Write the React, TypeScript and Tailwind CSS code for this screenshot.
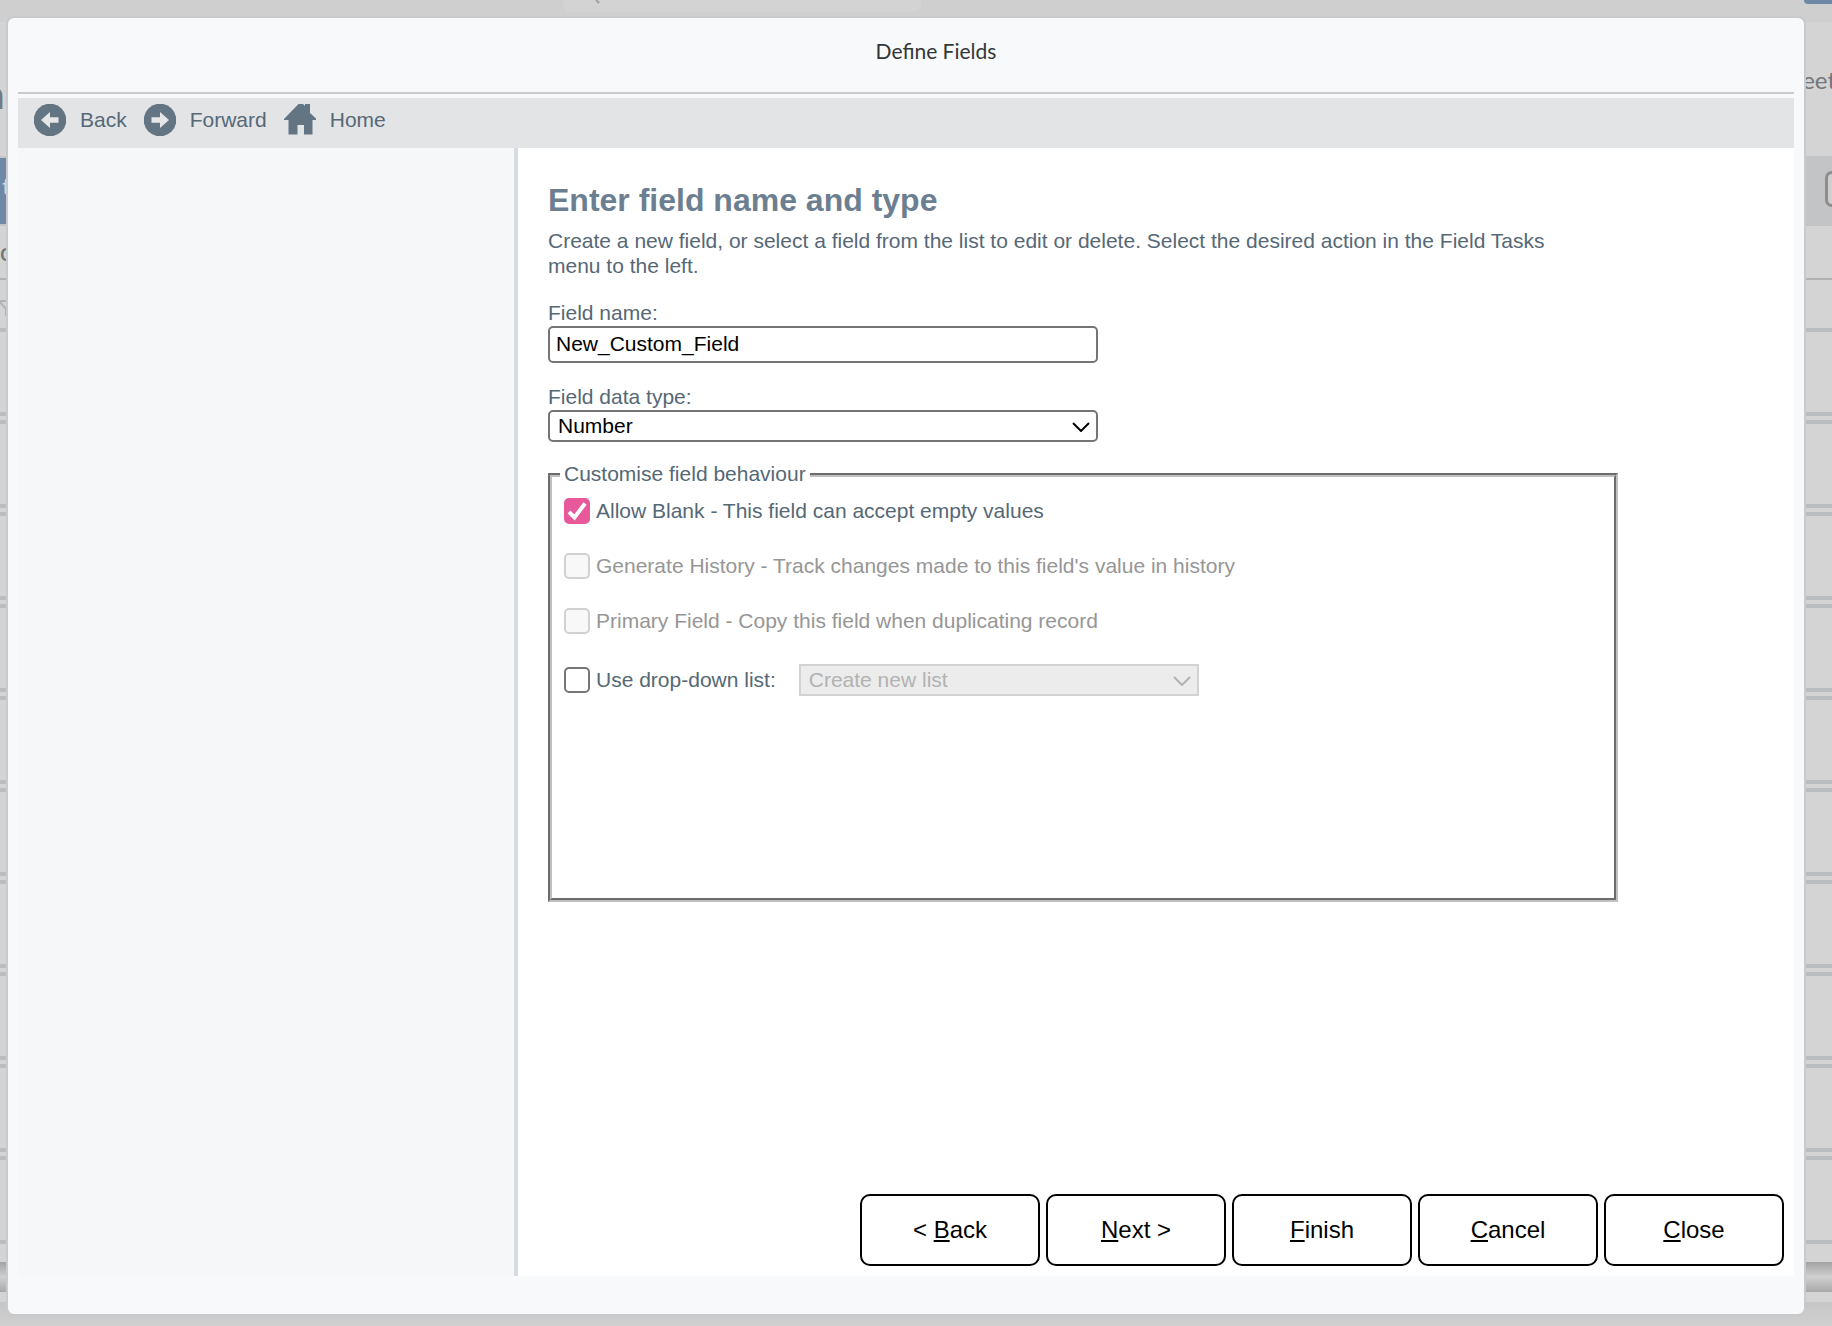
import { ReactNode, useState } from 'react';

const GRID_ROWS = 9;

function Chevron({ className }: { className: string }) {
  return (
    <svg className={className} viewBox="0 0 18 10" fill="none" stroke="currentColor" strokeWidth={2}>
      <path d="M1 1l8 8 8-8" />
    </svg>
  );
}

function ArrowIcon({ forward = false }: { forward?: boolean }) {
  return (
    <svg className={forward ? 'size-8 -scale-x-100' : 'size-8'} viewBox="0 0 32 32">
      <circle cx="16" cy="16" r="16.3" fill="#637583" />
      <path d="M7 16l9-8v5.300h8.500v5.400H16V24z" fill="#e4e6e8" />
    </svg>
  );
}

function HomeIcon() {
  return (
    <svg className="size-8" viewBox="0 0 32 32" fill="#637583">
      <path d="M0 15L14.500 0H19l2 2V0h5v9l6 5.500V16h-3.500v14.500H20V21h-6.500v9.500h-9V16H0z" />
    </svg>
  );
}

interface ToolLinkProps {
  icon: ReactNode;
  label: string;
}

function ToolLink({ icon, label }: ToolLinkProps) {
  return (
    <a href="#" className="flex items-center gap-[14px]">
      {icon}
      <span className="pb-0.5">{label}</span>
    </a>
  );
}

interface CheckRowProps {
  id: string;
  label: string;
  checked?: boolean;
  disabled?: boolean;
  onChange?: (checked: boolean) => void;
}

function CheckRow({ id, label, checked = false, disabled = false, onChange }: CheckRowProps) {
  return (
    <div className="flex h-[26px] items-center gap-1.5">
      <span className="relative flex size-[26px]">
        <input
          id={id}
          type="checkbox"
          checked={checked}
          disabled={disabled}
          onChange={(e) => onChange?.(e.target.checked)}
          className="size-[26px] appearance-none rounded-[5px] border-2 border-[#767676] bg-white checked:border-[#e8599c] checked:bg-[#e8599c] disabled:border-[#d1d1d1] disabled:bg-[#f8f8f8]"
        />
        {checked && (
          <svg
            className="pointer-events-none absolute inset-0 size-[26px]"
            viewBox="0 0 26 26"
            fill="none"
            stroke="white"
            strokeWidth={4}
          >
            <path d="M5 14l5.500 5.500L21 5.500" />
          </svg>
        )}
      </span>
      <label htmlFor={id} className={disabled ? 'pb-0.5 text-[#969696]' : 'pb-0.5'}>
        {label}
      </label>
    </div>
  );
}

interface WizardButtonProps {
  accessKey: string;
  before?: string;
  after: string;
}

function WizardButton({ accessKey, before = '', after }: WizardButtonProps) {
  return (
    <button
      type="button"
      accessKey={accessKey.toLowerCase()}
      className="h-[72px] w-[180px] rounded-[10px] border-2 border-black bg-white text-2xl text-black"
    >
      {before}
      <span className="underline">{accessKey}</span>
      {after}
    </button>
  );
}

// Dimmed page that stays visible around the edges of the dialog
function Backdrop() {
  return (
    <div className="absolute inset-0 flex flex-col overflow-hidden bg-[#d4d4d4]" aria-hidden="true">
      <div className="flex h-[22px] items-start justify-between bg-[#cfcfcf]">
        <div className="ml-[563px] h-3 w-[358px] rounded-b-lg bg-[#d3d3d3] pl-8">
          <svg className="h-1 w-2" viewBox="0 0 8 4" stroke="#9aa2a8" strokeWidth={2}>
            <path d="M1 0l3 3" />
          </svg>
        </div>
        <div className="h-1 w-7 rounded-bl-lg bg-[#6f88a8]" />
      </div>
      <div className="flex h-[134px] items-start justify-between pt-10">
        <span className="-ml-[18px] mt-0.5 font-[Lato] text-[40px] leading-[60px] font-bold text-[#757b80]">n</span>
        <span className="-mr-1 mt-1 font-[Lato] text-2xl leading-7 text-[#72777b]">eet</span>
      </div>
      <div className="flex h-[70px] items-start justify-between border-y-2 border-[#c3c4c6] bg-[#c3c4c6]">
        <div className="h-[66px] w-20 bg-[#6f88a8] pt-3 pl-0.5 font-[Lato] text-2xl text-[#d4d4d4]">t</div>
        <div className="mt-[13px] h-9 w-[7px] rounded-l-lg border-y-3 border-l-3 border-[#8d8d8d] bg-[#cfcfcf]" />
      </div>
      <div className="flex h-[54px] items-center border-b-2 border-[#b1b1b2]">
        <span className="font-[Lato] text-2xl font-medium text-[#6f7475]">c</span>
      </div>
      <div className="flex h-[52px] items-center border-b-4 border-[#b9bdc0] pt-3">
        <svg className="-ml-0.5 h-5 w-6" viewBox="0 0 24 20" fill="none" stroke="#adb5bb" strokeWidth={2}>
          <path d="M1 1h20l-6 8v10l-7-4V9z" />
        </svg>
      </div>
      {Array.from({ length: GRID_ROWS }, (_, i) => (
        <div key={i} className="h-[92px] pt-20">
          <div className="h-3 border-y-4 border-[#b9bdc0]" />
        </div>
      ))}
      <div className="h-[84px] border-b-4 border-[#b9bdc0]" />
      <div className="h-[18px]" />
      <div className="h-[30px] bg-linear-to-b from-[#a3a3a3] via-[#d0d0d0] to-[#a8a8a8]" />
      <div className="h-2.5" />
      <div className="grow bg-linear-to-b from-[#c6c6c6] to-[#d0d0d0]" />
    </div>
  );
}

export default function App() {
  const [fieldName, setFieldName] = useState('New_Custom_Field');
  const [allowBlank, setAllowBlank] = useState(true);
  const [useList, setUseList] = useState(false);

  return (
    <div className="relative flex min-h-screen flex-col overflow-hidden pt-4 pr-[26px] pb-2.5 pl-1.5 font-['Liberation_Sans',Arial,sans-serif] text-[21px] leading-[25px] text-[#566876]">
      <Backdrop />

      <div
        role="dialog"
        aria-labelledby="dialog-title"
        className="relative flex grow flex-col rounded-lg border-2 border-[#c9cacc] bg-[#f8f9fb] px-2.5 pb-[38px]"
      >
        <header className="flex h-[76px] justify-center border-b-2 border-[#c9cbcd] pt-[19px] pl-[60px]">
          <h1 id="dialog-title" className="font-[Lato,sans-serif] text-[21px] leading-7 text-[#333637]">
            Define Fields
          </h1>
        </header>

        <nav className="mt-1 flex h-[50px] gap-[17px] bg-[#e2e4e6] px-4 pt-1.5 pb-3">
          <ToolLink icon={<ArrowIcon />} label="Back" />
          <ToolLink icon={<ArrowIcon forward />} label="Forward" />
          <ToolLink icon={<HomeIcon />} label="Home" />
        </nav>

        <div className="flex grow">
          <aside className="w-[500px] shrink-0 border-r-4 border-[#d6dbe1] bg-[#f6f7f9]" />

          <main className="flex grow flex-col bg-white pt-8 pr-2.5 pb-2.5 pl-[30px]">
            <h2 className="text-[32px] leading-10 font-bold text-[#6c7f91]">Enter field name and type</h2>
            <p className="mt-2 max-w-[1040px]">
              Create a new field, or select a field from the list to edit or delete. Select the desired action in the
              Field Tasks menu to the left.
            </p>

            <label htmlFor="field-name" className="mt-[22px] mb-px">
              Field name:
            </label>
            <input
              id="field-name"
              type="text"
              value={fieldName}
              onChange={(e) => setFieldName(e.target.value)}
              className="h-[37px] w-[550px] rounded-[5px] border-2 border-[#757575] bg-white px-1.5 pb-0.5 text-black"
            />

            <label htmlFor="field-type" className="mt-[21px] mb-px">
              Field data type:
            </label>
            <div className="relative w-[550px]">
              <select
                id="field-type"
                defaultValue="Number"
                className="block h-8 w-full appearance-none rounded-[5px] border-2 border-[#757575] bg-white px-2 pb-0.5 text-black"
              >
                <option>Number</option>
              </select>
              <Chevron className="pointer-events-none absolute top-3 right-2 h-2.5 w-[18px] text-black" />
            </div>

            <fieldset className="mt-5 h-[440px] max-w-[1070px] border-4 border-[#c0c0c0] px-3 [border-style:groove]">
              <legend className="-ml-1 px-1 pb-0.5 leading-6">Customise field behaviour</legend>
              <div className="flex flex-col gap-[29px] pt-[10px]">
                <CheckRow
                  id="allow-blank"
                  label="Allow Blank - This field can accept empty values"
                  checked={allowBlank}
                  onChange={setAllowBlank}
                />
                <CheckRow
                  id="history"
                  label="Generate History - Track changes made to this field's value in history"
                  disabled
                />
                <CheckRow id="primary" label="Primary Field - Copy this field when duplicating record" disabled />
                <div className="mt-px flex items-center gap-[23px]">
                  <CheckRow id="use-list" label="Use drop-down list:" checked={useList} onChange={setUseList} />
                  <div className="relative w-[400px]">
                    <select
                      aria-label="Drop-down list"
                      disabled={!useList}
                      className="block h-8 w-full appearance-none border-2 border-[#767676] bg-white px-2 pb-0.5 text-black disabled:border-[#d2d2d2] disabled:bg-[#ececec] disabled:text-[#b2b2b2] disabled:opacity-100"
                    >
                      <option>Create new list</option>
                    </select>
                    <Chevron className="pointer-events-none absolute top-3 right-2 h-2.5 w-[18px] text-[#b2b2b2]" />
                  </div>
                </div>
              </div>
            </fieldset>

            <div className="mt-auto flex justify-end gap-1.5">
              <WizardButton before="< " accessKey="B" after="ack" />
              <WizardButton accessKey="N" after="ext >" />
              <WizardButton accessKey="F" after="inish" />
              <WizardButton accessKey="C" after="ancel" />
              <WizardButton accessKey="C" after="lose" />
            </div>
          </main>
        </div>
      </div>
    </div>
  );
}
